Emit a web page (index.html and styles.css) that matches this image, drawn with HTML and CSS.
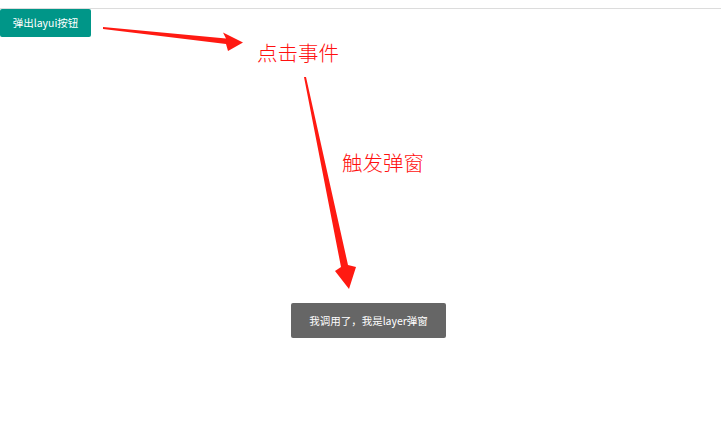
FILE: index.html
```html
<!DOCTYPE html>
<html lang="zh-CN">
<head>
  <meta charset="UTF-8" />
  <meta name="viewport" content="width=device-width, initial-scale=1.0"/>
  <title>layer 弹窗示例</title>
  <link rel="stylesheet" href="styles.css">
</head>
<body>

  <div class="page">
    <div class="top-rule"></div>
    <button class="layui-btn" id="open">弹出layui按钮</button>

    <!-- 说明标注：箭头和文字 -->
    <svg class="notes" width="721" height="426" viewBox="0 0 721 426">
      <polygon class="arrow" points="103,27 226,38.5 223,32.5 243,42.5 228,51 226,44 103,29"/>
      <polygon class="arrow" points="304,77 341,267 335,271 349,289 356,267 348,265 306,77"/>
      <text class="note" x="257" y="61">点击事件</text>
      <text class="note" x="342" y="171">触发弹窗</text>
    </svg>

    <div class="layer-msg">我调用了，我是layer弹窗</div>
  </div>

</body>
</html>
```

FILE: styles.css
```css
body {
  margin: 0;
  background-color: #fff;
  font-family: "Noto Sans CJK SC", "Noto Sans", sans-serif;
}

.page {
  position: relative;
  width: 721px;
  height: 426px;
  overflow: hidden;
}

.top-rule {
  height: 8px;
  border-bottom: 1px solid #dcdcdc;
}

.layui-btn {
  display: block;
  width: 91px;
  height: 28px;
  padding: 0;
  border: none;
  border-radius: 2px;
  background-color: #009688;
  color: #fff;
  font-family: inherit;
  font-size: 10.5px;
  line-height: 28px;
  text-align: center;
  cursor: pointer;
}

.notes {
  position: absolute;
  left: 0;
  top: 0;
}

.arrow {
  fill: #ff1a12;
}

.note {
  fill: #ff1010;
  font-family: "Noto Sans CJK SC", sans-serif;
  font-size: 20.5px;
  font-weight: 300;
}

.layer-msg {
  position: absolute;
  left: 291px;
  top: 303px;
  width: 155px;
  height: 35px;
  box-sizing: border-box;
  border-radius: 2px;
  background-color: rgba(0, 0, 0, 0.6);
  color: #fff;
  font-size: 10.5px;
  line-height: 35px;
  text-align: center;
  white-space: nowrap;
}
```
